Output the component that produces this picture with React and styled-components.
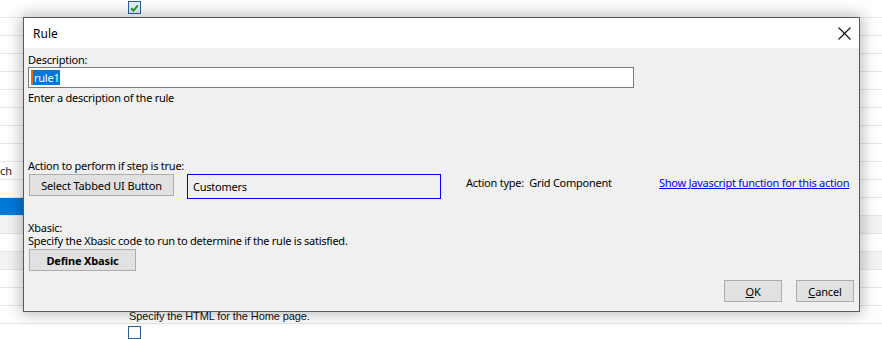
import React from "react";
import styled, { createGlobalStyle } from "styled-components";

const Global = createGlobalStyle`
  html, body { margin: 0; padding: 0; background: #fff; }
  body { font-family: "Liberation Sans", Arial, sans-serif; }
`;

const Page = styled.div`
  position: relative;
  width: 882px;
  height: 339px;
  overflow: hidden;
  background: #fff;
`;

const Grid = styled.div`
  display: flex;
  flex-direction: column;
`;

const Row = styled.div`
  height: 17px;
  border-bottom: 1px solid #e6e6e6;
  background: ${(p) => (p.$shade ? "#f3f3f3" : "#fff")};
  display: flex;
  align-items: center;
  font-family: "Noto Sans", sans-serif;
  font-size: 11px;
  color: #222;
`;

const Cell = styled.div`
  width: ${(p) => p.$w}px;
  height: 100%;
  background: ${(p) => (p.$selected ? "#0078d7" : "transparent")};
  display: flex;
  align-items: center;
  box-sizing: border-box;
  white-space: nowrap;
  overflow: hidden;
`;

const PageColumn = styled.div`
  position: absolute;
  inset: 0;
  padding-left: 128px;
  display: flex;
  flex-direction: column;
  justify-content: space-between;
  padding-top: 1px;
`;

const Check = styled.div`
  width: 11px;
  height: 11px;
  border: 1px solid #2b5d96;
  background: ${(p) => (p.$on ? "#e8eef7" : "#fff")};
  display: flex;
  align-items: center;
  justify-content: center;
`;

const BottomBlock = styled.div`
  display: flex;
  flex-direction: column;
  gap: 4px;
`;

const PageText = styled.div`
  font-family: "Liberation Sans", Arial, sans-serif;
  font-size: 11px;
  letter-spacing: -0.1px;
  color: #111;
  padding-left: 1px;
  line-height: 12px;
`;

const Dialog = styled.div`
  position: absolute;
  left: 23px;
  top: 17px;
  width: 835px;
  height: 293px;
  border: 1px solid #595959;
  background: #f0f0f0;
  box-shadow: 0 0 14px 2px rgba(0, 0, 0, 0.28);
  display: flex;
  flex-direction: column;
  font-family: "Noto Sans", sans-serif;
  font-size: 11px;
  letter-spacing: -0.25px;
  color: #000;
`;

const TitleBar = styled.div`
  height: 30px;
  background: #fff;
  display: flex;
  align-items: center;
  justify-content: space-between;
  padding-left: 9px;
  padding-right: 8px;
  flex-shrink: 0;
`;

const Title = styled.div`
  font-size: 12px;
  letter-spacing: 0;
  color: #000;
`;

const Close = styled.div`
  width: 14px;
  height: 14px;
  display: flex;
  align-items: center;
  justify-content: center;
`;

const Body = styled.div`
  flex: 1;
  display: flex;
  flex-direction: column;
  padding: 5px 5px 9px 4px;
`;

const Label = styled.div`
  line-height: 13px;
  white-space: nowrap;
  margin-top: ${(p) => p.$mt || 0}px;
`;

const TextInput = styled.div`
  width: 602px;
  height: 19px;
  border: 1px solid #7a7a7a;
  background: #fff;
  margin-top: 1px;
  display: flex;
  align-items: center;
  padding-left: 2px;
`;

const Selected = styled.span`
  background: #0078d7;
  color: #fff;
  line-height: 15px;
  padding: 0 1px;
  border-left: 2px solid #e07020;
`;

const ActionRow = styled.div`
  display: flex;
  align-items: flex-start;
  margin-top: 2px;
`;

const Button = styled.div`
  width: ${(p) => p.$w}px;
  height: ${(p) => p.$h || 20}px;
  border: 1px solid #adadad;
  background: #e1e1e1;
  display: flex;
  align-items: center;
  justify-content: center;
  font-weight: ${(p) => (p.$bold ? 700 : 400)};
  letter-spacing: -0.15px;
  white-space: nowrap;
  margin-left: ${(p) => p.$ml || 0}px;
`;

const ValueBox = styled.div`
  width: 254px;
  height: 25px;
  border: 1px solid #0000ff;
  margin-left: 13px;
  display: flex;
  align-items: center;
  padding-left: 5px;
  box-sizing: border-box;
`;

const TypeText = styled.div`
  margin-left: 25px;
  margin-top: 1px;
  width: 193px;
  white-space: nowrap;
`;

const Link = styled.a`
  color: #0000ff;
  text-decoration: underline;
  margin-top: 1px;
  white-space: nowrap;
  cursor: pointer;
`;

const Footer = styled.div`
  display: flex;
  justify-content: flex-end;
  gap: 14px;
  margin-top: auto;
`;

const U = styled.span`
  text-decoration: underline;
`;

export default function App() {
  const rows = Array.from({ length: 19 }, (_, i) => i);
  return (
    <>
      <Global />
      <Page>
        <Grid>
          {rows.map((i) => (
            <Row key={i} $shade={i === 12 || i === 14}>
              {i === 9 && <Cell $w={120}>ch</Cell>}
              {i === 11 && <Cell $w={120} $selected />}
            </Row>
          ))}
        </Grid>
        <PageColumn>
          <Check $on>
            <svg width="9" height="8" viewBox="0 0 9 8">
              <path d="M1 4.2 L3.4 6.5 L8 1.3" stroke="#1fa02a" strokeWidth="2" fill="none" />
            </svg>
          </Check>
          <BottomBlock>
            <PageText>Specify the HTML for the Home page.</PageText>
            <Check />
          </BottomBlock>
        </PageColumn>
        <Dialog>
          <TitleBar>
            <Title>Rule</Title>
            <Close>
              <svg width="13" height="13" viewBox="0 0 13 13">
                <path d="M0.5 0.5 L12.5 12.5 M12.5 0.5 L0.5 12.5" stroke="#111" strokeWidth="1.1" />
              </svg>
            </Close>
          </TitleBar>
          <Body>
            <Label>Description:</Label>
            <TextInput>
              <Selected>rule1</Selected>
            </TextInput>
            <Label $mt={3}>Enter a description of the rule</Label>
            <Label $mt={55}>Action to perform if step is true:</Label>
            <ActionRow>
              <Button $w={143} $ml={1}>Select Tabbed UI Button</Button>
              <ValueBox>Customers</ValueBox>
              <TypeText>Action type:&nbsp; Grid Component</TypeText>
              <Link>Show Javascript function for this action</Link>
            </ActionRow>
            <Label $mt={22}>Xbasic:</Label>
            <Label>Specify the Xbasic code to run to determine if the rule is satisfied.</Label>
            <ActionRow>
              <Button $w={105} $ml={1} $bold>Define Xbasic</Button>
            </ActionRow>
            <Footer>
              <Button $w={56}><U>O</U>K</Button>
              <Button $w={56}><U>C</U>ancel</Button>
            </Footer>
          </Body>
        </Dialog>
      </Page>
    </>
  );
}
